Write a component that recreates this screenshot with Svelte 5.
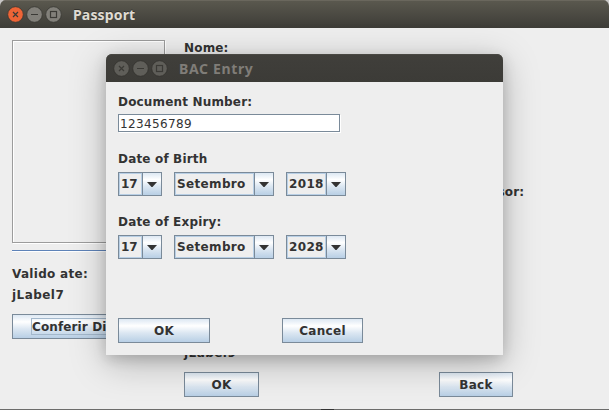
<script>
  const dates = [
    { label: 'Date of Birth', parts: ['17', 'Setembro', '2018'] },
    { label: 'Date of Expiry:', parts: ['17', 'Setembro', '2028'] }
  ];
  const sizes = ['day', 'month', 'year'];
</script>

{#snippet controls()}
  <div class="controls">
    {#each ['close', 'min', 'max'] as kind}
      <svg class={kind} width="17" height="17" viewBox="0 0 17 17">
        <circle class="disc" cx="8.5" cy="8.5" r="7.8" />
        {#if kind === 'close'}
          <path class="glyph" d="M6 6 L11 11 M11 6 L6 11" />
        {:else if kind === 'min'}
          <path class="glyph" d="M5 8.5 H12" />
        {:else}
          <rect class="glyph" x="5.5" y="5.5" width="6" height="6" />
        {/if}
      </svg>
    {/each}
  </div>
{/snippet}

{#snippet combo(value, size)}
  <div class="combo {size}">
    <span class="value">{value}</span>
    <span class="arrow">
      <svg width="10" height="5" viewBox="0 0 10 5"><path d="M0 0 H10 L5.5 5 H4.5 Z" fill="#333" /></svg>
    </span>
  </div>
{/snippet}

<div class="window">
  <header class="bar">
    {@render controls()}
    <span class="title">Passport</span>
  </header>
  <main>
    <section class="left">
      <div class="photo"></div>
      <div class="rule"></div>
      <div class="label valid">Valido ate:</div>
      <div class="label seven">jLabel7</div>
      <button class="check"><span>Conferir Di</span></button>
    </section>
    <section class="right">
      <div class="label name">Nome:</div>
      <div class="label issuer">sor:</div>
      <div class="label nine">jLabel9</div>
      <div class="actions">
        <button class="ok">OK</button>
        <button class="back">Back</button>
      </div>
    </section>
  </main>
  <footer></footer>

  <div class="dialog">
    <header class="bar">
      {@render controls()}
      <span class="title">BAC Entry</span>
    </header>
    <div class="form">
      <div class="label">Document Number:</div>
      <div class="field">123456789</div>
      {#each dates as date}
        <div class="label date-label">{date.label}</div>
        <div class="combos">
          {#each date.parts as part, i}
            {@render combo(part, sizes[i])}
          {/each}
        </div>
      {/each}
      <div class="buttons">
        <button class="dialog-ok">OK</button>
        <button class="cancel">Cancel</button>
      </div>
    </div>
  </div>
</div>

<style>
  :global(body) { background: #c8c7c6; }
  * { box-sizing: border-box; }
  .window {
    position: relative;
    width: 609px;
    height: 410px;
    overflow: hidden;
    display: flex;
    flex-direction: column;
    background: #eee;
    border-radius: 6px 6px 0 0;
    font: bold 12px/14px "DejaVu Sans", sans-serif;
    letter-spacing: 0.17px;
    color: #333;
  }
  .bar {
    flex: none;
    height: 28px;
    display: flex;
    align-items: center;
    padding: 1px 0 0 7px;
    background: linear-gradient(#5b594f, #3d3c37);
    box-shadow: inset 0 1px #6a675d;
  }
  .controls { display: flex; gap: 2px; }
  .controls svg { display: block; }
  .disc { fill: #82807a; stroke: #393833; stroke-width: 0.8; }
  .close .disc { fill: #ee6436; }
  .glyph { fill: none; stroke: #3b3a36; stroke-width: 1.2; }
  .title {
    margin: 0 0 0 11px;
    font: bold 14px/20px "Noto Sans", sans-serif;
    letter-spacing: 0.15px;
    color: #dfdbd2;
    text-shadow: 0 -1px #33322e;
  }
  main { flex: 1; display: flex; padding: 12px 0 0 12px; }
  footer {
    flex: none;
    height: 1px;
    background: linear-gradient(90deg, #6c6c6b 321px, #333 321px, #333 334px, #6c6c6b 334px);
  }
  .left { width: 172px; display: flex; flex-direction: column; }
  .photo {
    width: 153px;
    height: 203px;
    border: 1px solid #9c9c9c;
    box-shadow: 1px 1px #fff, inset 1px 1px #fff;
  }
  .rule { height: 2px; margin-top: 7px; background: linear-gradient(#5e83b8 50%, #fff 50%); }
  .label { white-space: nowrap; }
  .valid { margin-top: 15px; letter-spacing: 0.3px; }
  .seven, .nine { letter-spacing: 0.45px; }
  .seven { margin-top: 7px; }
  button {
    display: flex;
    align-items: center;
    justify-content: center;
    height: 25px;
    padding: 0;
    border: 1px solid #7a8a99;
    border-radius: 0;
    background: linear-gradient(#dde8f3 0%, #fff 30%, #dce7f2 60%, #b8cfe5 100%);
    font: inherit;
    letter-spacing: 0.3px;
    color: #333;
  }
  .check { width: 153px; margin-top: 12px; justify-content: flex-start; padding-left: 18px; }
  .check span {
    width: 115px;
    height: 17px;
    line-height: 16px;
    text-align: left;
    white-space: nowrap;
    letter-spacing: 0.12px;
    border: 1px solid #a3b8cc;
  }
  .right { flex: 1; display: flex; flex-direction: column; }
  .name { margin-top: 1px; }
  .issuer { margin: 130px 0 0 313.5px; }
  .nine { margin-top: 147px; }
  .actions { display: flex; gap: 180px; margin-top: 12px; }
  .ok { width: 75px; }
  .back { width: 74px; }

  .dialog {
    position: absolute;
    left: 106px;
    top: 54px;
    width: 397px;
    height: 301px;
    display: flex;
    flex-direction: column;
    background: #eee;
    border-radius: 6px 6px 0 0;
    box-shadow: 0 8px 36px rgba(0, 0, 0, 0.26), 0 4px 14px rgba(0, 0, 0, 0.16);
  }
  .dialog .bar {
    border-radius: 6px 6px 0 0;
    background: linear-gradient(#403f3b, #3c3b37);
    box-shadow: inset 0 1px #494843;
  }
  .dialog .disc { fill: #5f5e59; stroke: #33322e; }
  .dialog .title { color: #807d78; text-shadow: none; letter-spacing: 0.65px; }
  .form { padding: 13px 12px 0; display: flex; flex-direction: column; }
  .field {
    width: 222px;
    height: 18px;
    margin-top: 5px;
    padding: 2px 0 0 1px;
    border: 1px solid #7a8a99;
    background: #fff;
    box-shadow: 1px 1px #fff;
    font-weight: normal;
    letter-spacing: 0.37px;
  }
  .date-label { margin-top: 20px; }
  .combos { display: flex; gap: 12px; margin-top: 6px; }
  .combos + .date-label { margin-top: 19px; }
  .combo { display: flex; height: 24px; border: 1px solid #7a8a99; }
  .day { width: 44px; }
  .month { width: 100px; }
  .year { width: 60px; }
  .value {
    flex: 1;
    padding: 3px 0 0 1px;
    border: 1px solid #b8cfe5;
    letter-spacing: 0.35px;
  }
  .day .value { letter-spacing: 0; }
  .arrow {
    flex: none;
    width: 19px;
    display: flex;
    align-items: center;
    justify-content: center;
    border-left: 1px solid #7a8a99;
    background: linear-gradient(#dde8f3 0%, #fff 30%, #dce7f2 60%, #b8cfe5 100%);
  }
  .arrow svg { margin-top: 1px; }
  .buttons { display: flex; gap: 72px; margin-top: 59px; }
  .dialog-ok { width: 92px; }
  .cancel { width: 81px; }
</style>
